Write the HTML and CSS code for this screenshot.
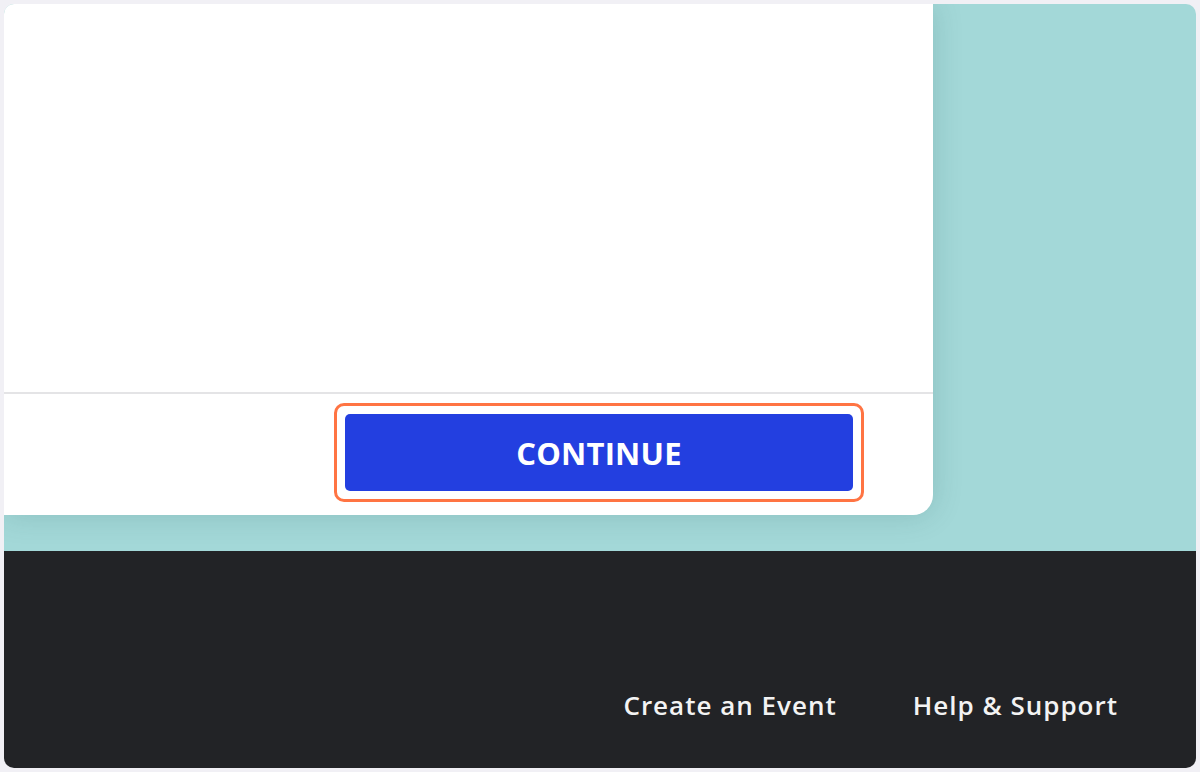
FILE: index.html
```html
<!DOCTYPE html>
<html lang="en">
<head>
<meta charset="utf-8">
<title>Continue</title>
<link rel="stylesheet" href="styles.css">
</head>
<body>
<div class="frame">
  <div class="screen">
    <section class="stage">
      <div class="card">
        <div class="card-body"></div>
        <div class="card-footer">
          <div class="focus-ring">
            <button class="continue" type="button">CONTINUE</button>
          </div>
        </div>
      </div>
    </section>
    <footer class="site-footer">
      <a class="footer-link" href="#">Create an Event</a>
      <a class="footer-link" href="#">Help &amp; Support</a>
    </footer>
  </div>
</div>
</body>
</html>
```
FILE: styles.css
```css
html, body {
  margin: 0;
  padding: 0;
  background: #f1f0f5;
}
body {
  font-family: "Open Sans", "Liberation Sans", sans-serif;
}
.frame {
  width: 1200px;
  height: 772px;
  box-sizing: border-box;
  padding: 4px 4px 4px 4px;
}
.screen {
  height: 100%;
  border-radius: 10px;
  overflow: hidden;
  display: flex;
  flex-direction: column;
}
.stage {
  height: 547px;
  background: #a3d8d8;
  flex: none;
}
.card {
  width: 929px;
  height: 511px;
  background: #ffffff;
  border-bottom-right-radius: 20px;
  box-shadow: 0 0 30px rgba(40, 90, 90, 0.2);
  display: flex;
  flex-direction: column;
}
.card-body {
  height: 388px;
  border-bottom: 2px solid #e4e4e6;
  flex: none;
}
.card-footer {
  flex: 1;
  display: flex;
  justify-content: flex-end;
  align-items: flex-start;
  padding: 9px 69px 0 0;
}
.focus-ring {
  border: 3px solid #ff7443;
  border-radius: 10px;
  padding: 8px;
  display: flex;
}
.continue {
  width: 508px;
  height: 77px;
  border: none;
  border-radius: 5px;
  background: #233fe0;
  color: #ffffff;
  font-family: "Open Sans", "Liberation Sans", sans-serif;
  font-weight: 700;
  font-size: 31px;
  letter-spacing: 0.2px;
  padding: 0;
  cursor: pointer;
}
.site-footer {
  flex: 1;
  background: #222326;
  display: flex;
  justify-content: flex-end;
  align-items: flex-start;
  gap: 76px;
  padding: 138px 78px 0 0;
}
.footer-link {
  color: #f3f3f3;
  text-decoration: none;
  font-size: 26px;
  font-weight: 600;
  letter-spacing: 1px;
  line-height: 32px;
}
```
